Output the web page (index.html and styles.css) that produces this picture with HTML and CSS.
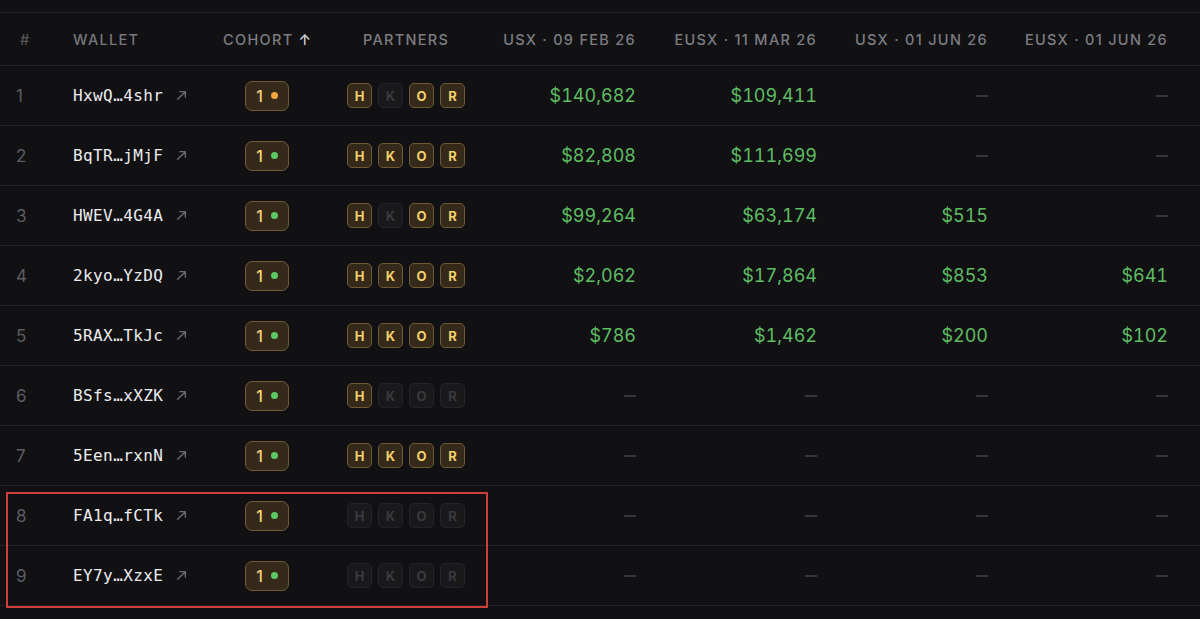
FILE: index.html
```html
<!DOCTYPE html>
<html>
<head>
<meta charset="utf-8">
<link rel="stylesheet" href="styles.css">
</head>
<body>
<div class="page">
  <div class="table">
    <div class="row head">
      <div class="c num">#</div>
      <div class="c wallet">Wallet</div>
      <div class="c center">Cohort <span class="sort">↑</span></div>
      <div class="c center">Partners</div>
      <div class="c right">USX · 09 Feb 26</div>
      <div class="c right">EUSX · 11 Mar 26</div>
      <div class="c right">USX · 01 Jun 26</div>
      <div class="c right last">EUSX · 01 Jun 26</div>
    </div>

    <div class="row">
      <div class="c num">1</div>
      <div class="c wallet"><span class="addr">HxwQ…4shr</span><svg class="ext" viewBox="0 0 10 10"><path d="M1.5 8.5L8.5 1.5M3.5 1.5H8.5V6.5"/></svg></div>
      <div class="c center"><span class="cohort">1<i class="dot orange"></i></span></div>
      <div class="c center"><div class="partners"><b class="p on">H</b><b class="p">K</b><b class="p on">O</b><b class="p on">R</b></div></div>
      <div class="c right val">$140,682</div>
      <div class="c right val">$109,411</div>
      <div class="c right"><i class="dash"></i></div>
      <div class="c right last"><i class="dash"></i></div>
    </div>

    <div class="row">
      <div class="c num">2</div>
      <div class="c wallet"><span class="addr">BqTR…jMjF</span><svg class="ext" viewBox="0 0 10 10"><path d="M1.5 8.5L8.5 1.5M3.5 1.5H8.5V6.5"/></svg></div>
      <div class="c center"><span class="cohort">1<i class="dot"></i></span></div>
      <div class="c center"><div class="partners"><b class="p on">H</b><b class="p on">K</b><b class="p on">O</b><b class="p on">R</b></div></div>
      <div class="c right val">$82,808</div>
      <div class="c right val">$111,699</div>
      <div class="c right"><i class="dash"></i></div>
      <div class="c right last"><i class="dash"></i></div>
    </div>

    <div class="row">
      <div class="c num">3</div>
      <div class="c wallet"><span class="addr">HWEV…4G4A</span><svg class="ext" viewBox="0 0 10 10"><path d="M1.5 8.5L8.5 1.5M3.5 1.5H8.5V6.5"/></svg></div>
      <div class="c center"><span class="cohort">1<i class="dot"></i></span></div>
      <div class="c center"><div class="partners"><b class="p on">H</b><b class="p">K</b><b class="p on">O</b><b class="p on">R</b></div></div>
      <div class="c right val">$99,264</div>
      <div class="c right val">$63,174</div>
      <div class="c right val">$515</div>
      <div class="c right last"><i class="dash"></i></div>
    </div>

    <div class="row">
      <div class="c num">4</div>
      <div class="c wallet"><span class="addr">2kyo…YzDQ</span><svg class="ext" viewBox="0 0 10 10"><path d="M1.5 8.5L8.5 1.5M3.5 1.5H8.5V6.5"/></svg></div>
      <div class="c center"><span class="cohort">1<i class="dot"></i></span></div>
      <div class="c center"><div class="partners"><b class="p on">H</b><b class="p on">K</b><b class="p on">O</b><b class="p on">R</b></div></div>
      <div class="c right val">$2,062</div>
      <div class="c right val">$17,864</div>
      <div class="c right val">$853</div>
      <div class="c right last val">$641</div>
    </div>

    <div class="row">
      <div class="c num">5</div>
      <div class="c wallet"><span class="addr">5RAX…TkJc</span><svg class="ext" viewBox="0 0 10 10"><path d="M1.5 8.5L8.5 1.5M3.5 1.5H8.5V6.5"/></svg></div>
      <div class="c center"><span class="cohort">1<i class="dot"></i></span></div>
      <div class="c center"><div class="partners"><b class="p on">H</b><b class="p on">K</b><b class="p on">O</b><b class="p on">R</b></div></div>
      <div class="c right val">$786</div>
      <div class="c right val">$1,462</div>
      <div class="c right val">$200</div>
      <div class="c right last val">$102</div>
    </div>

    <div class="row">
      <div class="c num">6</div>
      <div class="c wallet"><span class="addr">BSfs…xXZK</span><svg class="ext" viewBox="0 0 10 10"><path d="M1.5 8.5L8.5 1.5M3.5 1.5H8.5V6.5"/></svg></div>
      <div class="c center"><span class="cohort">1<i class="dot"></i></span></div>
      <div class="c center"><div class="partners"><b class="p on">H</b><b class="p">K</b><b class="p">O</b><b class="p">R</b></div></div>
      <div class="c right"><i class="dash"></i></div>
      <div class="c right"><i class="dash"></i></div>
      <div class="c right"><i class="dash"></i></div>
      <div class="c right last"><i class="dash"></i></div>
    </div>

    <div class="row">
      <div class="c num">7</div>
      <div class="c wallet"><span class="addr">5Een…rxnN</span><svg class="ext" viewBox="0 0 10 10"><path d="M1.5 8.5L8.5 1.5M3.5 1.5H8.5V6.5"/></svg></div>
      <div class="c center"><span class="cohort">1<i class="dot"></i></span></div>
      <div class="c center"><div class="partners"><b class="p on">H</b><b class="p on">K</b><b class="p on">O</b><b class="p on">R</b></div></div>
      <div class="c right"><i class="dash"></i></div>
      <div class="c right"><i class="dash"></i></div>
      <div class="c right"><i class="dash"></i></div>
      <div class="c right last"><i class="dash"></i></div>
    </div>

    <div class="row">
      <div class="c num">8</div>
      <div class="c wallet"><span class="addr">FA1q…fCTk</span><svg class="ext" viewBox="0 0 10 10"><path d="M1.5 8.5L8.5 1.5M3.5 1.5H8.5V6.5"/></svg></div>
      <div class="c center"><span class="cohort">1<i class="dot"></i></span></div>
      <div class="c center"><div class="partners"><b class="p">H</b><b class="p">K</b><b class="p">O</b><b class="p">R</b></div></div>
      <div class="c right"><i class="dash"></i></div>
      <div class="c right"><i class="dash"></i></div>
      <div class="c right"><i class="dash"></i></div>
      <div class="c right last"><i class="dash"></i></div>
    </div>

    <div class="row">
      <div class="c num">9</div>
      <div class="c wallet"><span class="addr">EY7y…XzxE</span><svg class="ext" viewBox="0 0 10 10"><path d="M1.5 8.5L8.5 1.5M3.5 1.5H8.5V6.5"/></svg></div>
      <div class="c center"><span class="cohort">1<i class="dot"></i></span></div>
      <div class="c center"><div class="partners"><b class="p">H</b><b class="p">K</b><b class="p">O</b><b class="p">R</b></div></div>
      <div class="c right"><i class="dash"></i></div>
      <div class="c right"><i class="dash"></i></div>
      <div class="c right"><i class="dash"></i></div>
      <div class="c right last"><i class="dash"></i></div>
    </div>

    <div class="highlight"></div>
  </div>
</div>
</body>
</html>
```

FILE: styles.css
```css
* { box-sizing: border-box; }
html, body {
  margin: 0;
  padding: 0;
  background: #111113;
}
body {
  font-family: Inter, "Liberation Sans", sans-serif;
  color: #e6e6e8;
  height: 619px;
  overflow: hidden;
}
.page {
  padding-top: 12px;
}
.table {
  position: relative;
  border-top: 1px solid #222226;
}
.row {
  display: grid;
  grid-template-columns: 57px 143px 134px 144px 174px 181px 171px 1fr;
  height: 60px;
  border-bottom: 1px solid #222226;
  align-items: center;
}
.row.head {
  height: 53px;
}
.c {
  padding: 0 16px;
  display: flex;
  align-items: center;
  white-space: nowrap;
  min-width: 0;
}
.c.center { justify-content: center; padding: 0; }
.c.right { justify-content: flex-end; }
.c.last { padding-right: 32px; }

.head .c {
  font-size: 14.5px;
  letter-spacing: 1.3px;
  text-transform: uppercase;
  color: #7c7c82;
  font-weight: 500;
}
.head .c.num { color: #55555a; padding-left: 20px; }
.head .c.wallet { color: #77777d; }
.sort {
  color: #d8d8dc;
  margin-left: 5px;
  letter-spacing: 0;
}

.num {
  font-size: 17px;
  color: #5c5c62;
}
.c.wallet { padding-right: 0; }
.addr {
  flex-shrink: 0;
  font-family: "DejaVu Sans Mono", "Liberation Mono", monospace;
  font-size: 16px;
  color: #ececee;
  letter-spacing: 0.4px;
}
.ext {
  flex-shrink: 0;
  width: 11px;
  height: 11px;
  margin-left: 13px;
  fill: none;
  stroke: #6a6a70;
  stroke-width: 1.3;
  stroke-linecap: round;
  stroke-linejoin: round;
}

.cohort {
  display: inline-flex;
  align-items: center;
  gap: 8px;
  width: 44px;
  height: 30px;
  justify-content: center;
  padding: 0;
  border-radius: 7px;
  background: #352a1a;
  border: 1px solid #6f5a36;
  color: #f3d27a;
  font-size: 16px;
  font-weight: 500;
}
.dot {
  width: 7px;
  height: 7px;
  border-radius: 50%;
  background: #5cc866;
}
.dot.orange { background: #f2a642; }

.partners {
  display: flex;
  gap: 6px;
}
.p {
  width: 25px;
  height: 25px;
  border-radius: 5px;
  display: flex;
  align-items: center;
  justify-content: center;
  font-size: 13px;
  font-weight: 700;
  background: #19191b;
  border: 1px solid #242427;
  color: #3a3a3e;
}
.p.on {
  background: #352a1a;
  border-color: #6f5a36;
  color: #f3d06c;
}

.val {
  font-size: 18px;
  color: #5ebd63;
  font-variant-numeric: tabular-nums;
}
.dash {
  width: 12px;
  height: 2px;
  background: #38383c;
}

.highlight {
  position: absolute;
  left: 6px;
  top: 479px;
  width: 482px;
  height: 116px;
  border: 2px solid #cf3f3a;
  pointer-events: none;
}
```
